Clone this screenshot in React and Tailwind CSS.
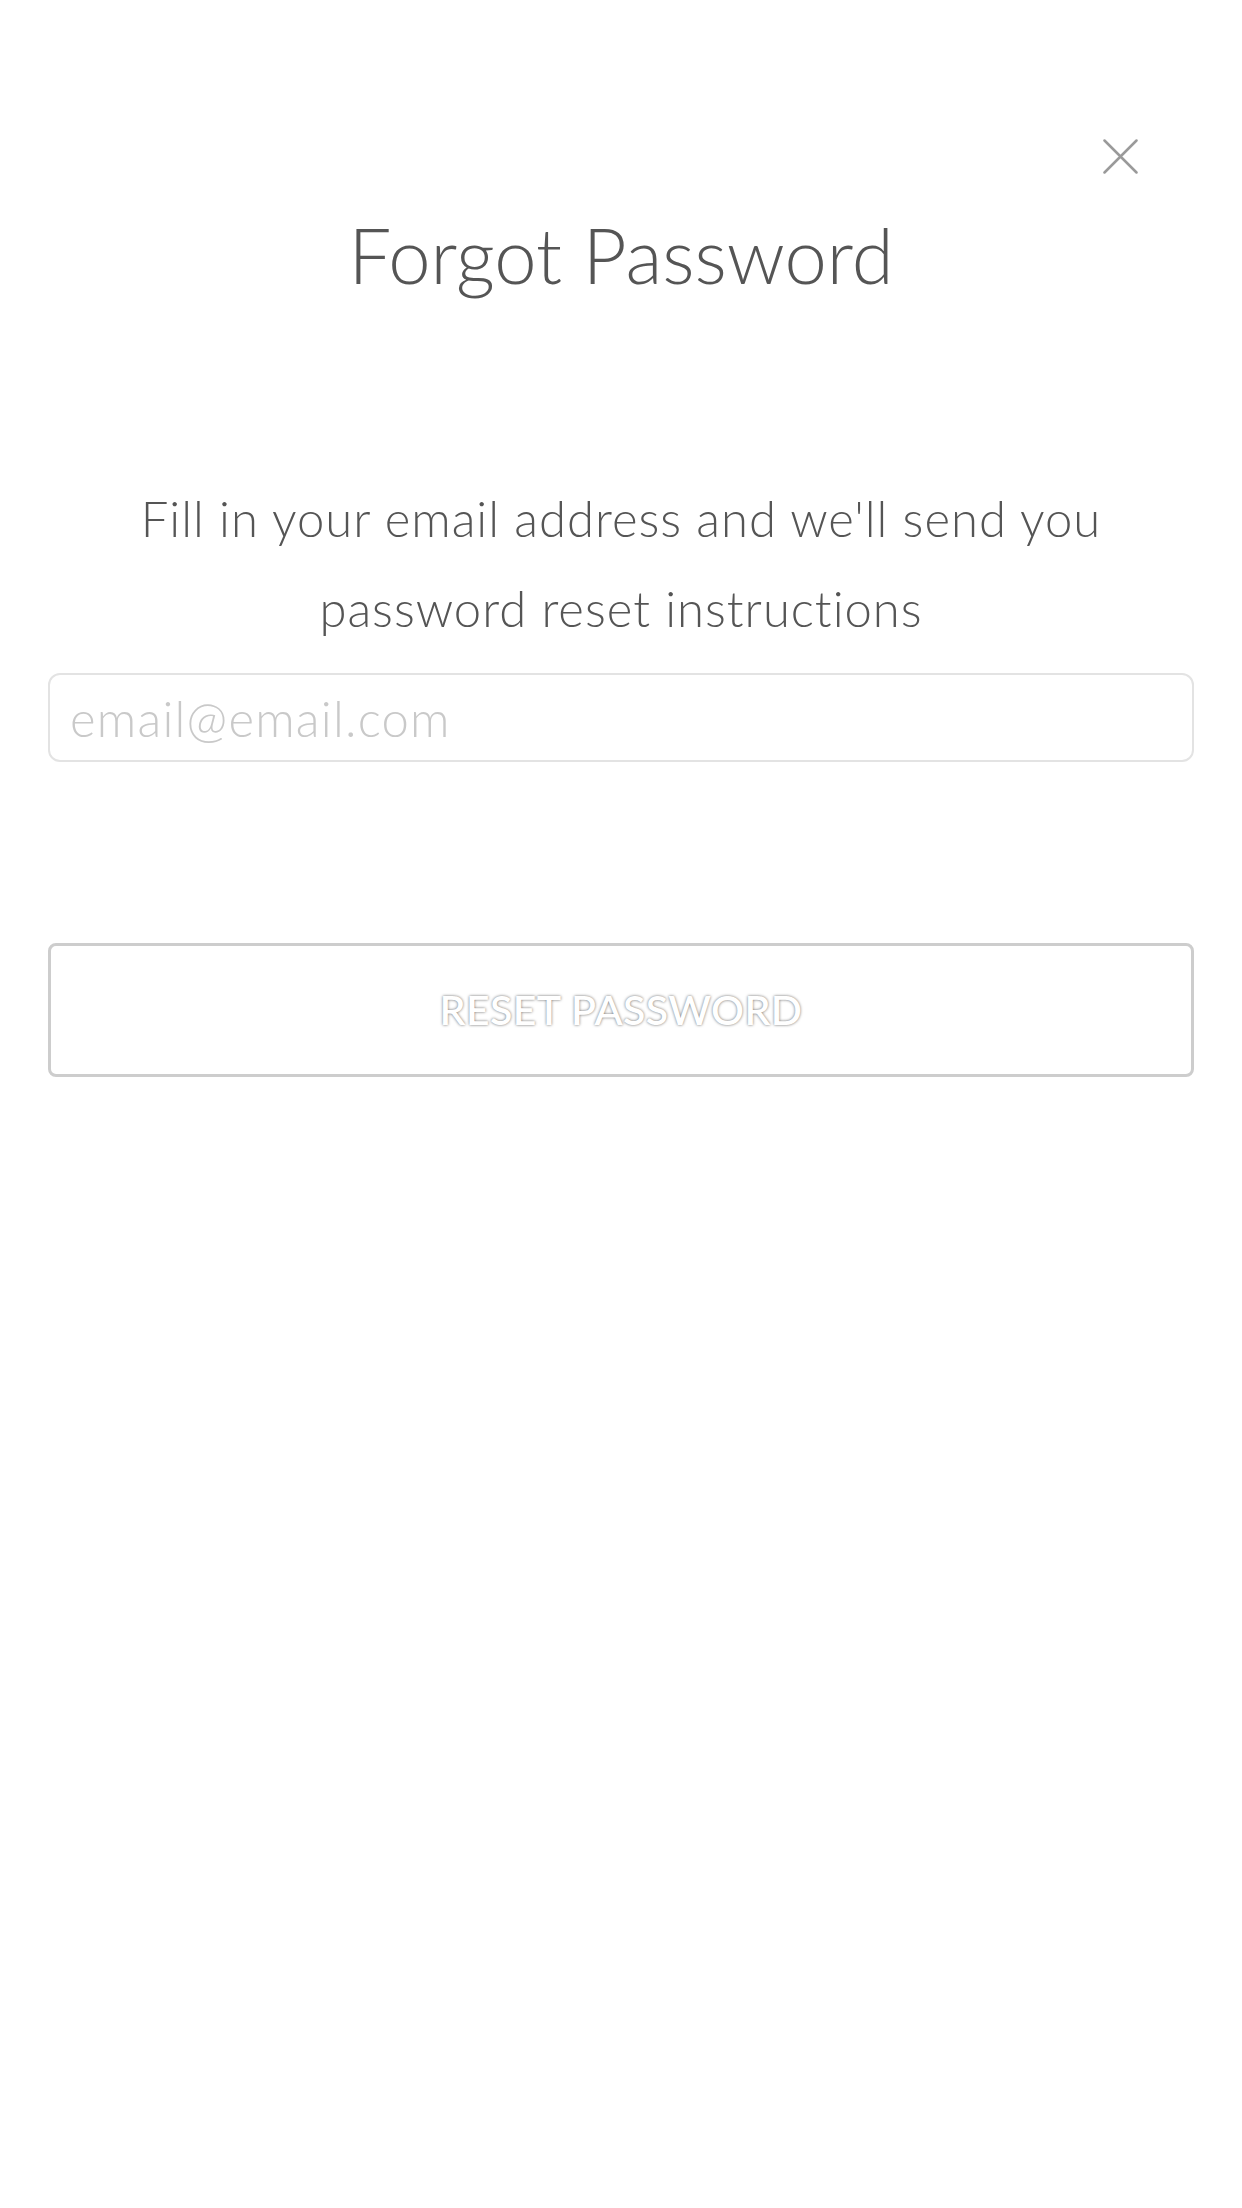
export default function App() {
    return (
        <div className="min-h-[2208px] w-full bg-white font-['Lato','Noto_Sans',sans-serif] text-[#555]">
            <div className="flex justify-end pr-[104px] pt-[139px]">
                <button type="button" aria-label="Close" className="h-[35px] w-[35px]">
                    <svg viewBox="0 0 35 35" className="h-[35px] w-[35px]">
                        <path d="M1.5 1.5 L33.5 33.5 M33.5 1.5 L1.5 33.5" stroke="#9a9a9a" strokeWidth="2.5" strokeLinecap="round" fill="none" />
                    </svg>
                </button>
            </div>

            <h1 className="mt-[41px] text-center text-[76px] font-light leading-[80px] text-[#555]">Forgot Password</h1>

            <p className="mx-auto mt-[178px] max-w-[1150px] text-center text-[49px] font-light leading-[90px] tracking-[0.02em] text-[#555]">
                Fill in your email address and we'll send you
                <br />
                password reset instructions
            </p>

            <div className="px-[48px]">
                <input
                    type="email"
                    placeholder="email@email.com"
                    className="mt-[20px] block h-[89px] w-full rounded-[12px] border-2 border-[#e3e3e3] px-[20px] text-[49px] font-light tracking-[0.025em] text-[#555] outline-none placeholder:text-[#c9c9c9]"
                />

                <button
                    type="button"
                    className="mt-[181px] flex h-[134px] w-full items-center justify-center rounded-[8px] border-[3px] border-[#cdcdcd] bg-white text-[41px] font-semibold tracking-[0.01em] text-white [text-shadow:0_0_3px_rgba(0,0,0,0.6)]"
                >
                    RESET PASSWORD
                </button>
            </div>
        </div>
    );
}
